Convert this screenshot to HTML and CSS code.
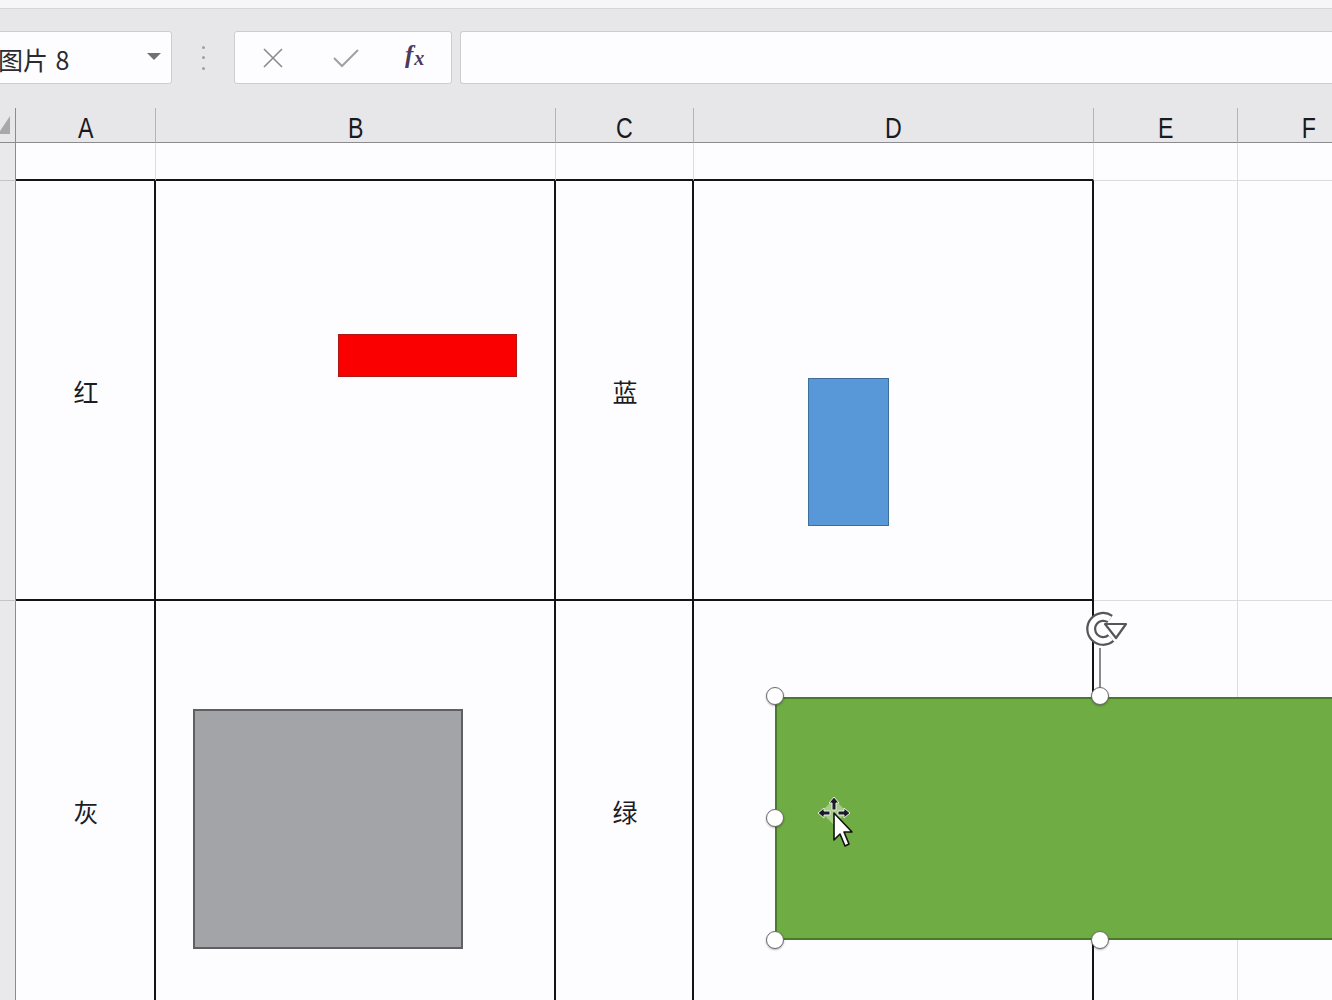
FILE: index.html
```html
<!DOCTYPE html>
<html lang="zh">
<head>
<meta charset="utf-8">
<link rel="stylesheet" href="styles.css">
</head>
<body>
<div class="strip"></div>
<div class="toolbar">
  <div class="namebox">
    <span class="name">图片 8</span>
    <span class="caret"></span>
  </div>
  <div class="dots"><i></i><i></i><i></i></div>
  <div class="fbtns">
    <svg class="ico-x" width="22" height="22" viewBox="0 0 22 22"><path d="M2 2 L20 20 M20 2 L2 20" stroke="#8a8a8e" stroke-width="1.6" fill="none"/></svg>
    <svg class="ico-ok" width="26" height="22" viewBox="0 0 26 22"><path d="M1 11 L9 19 L25 3" stroke="#a0a0a4" stroke-width="2" fill="none"/></svg>
    <span class="fx">f<sub>x</sub></span>
  </div>
  <div class="finput"></div>
</div>
<div class="sheet">
  <div class="hc corner"><span class="tri"></span></div>
  <div class="hc"><span class="ltr">A</span></div>
  <div class="hc"><span class="ltr">B</span></div>
  <div class="hc"><span class="ltr">C</span></div>
  <div class="hc"><span class="ltr">D</span></div>
  <div class="hc"><span class="ltr">E</span></div>
  <div class="hc"><span class="ltr">F</span></div>

  <div class="rh"></div>
  <div class="c tb"></div>
  <div class="c tb"></div>
  <div class="c tb"></div>
  <div class="c tb"></div>
  <div class="c"></div>
  <div class="c"></div>

  <div class="rh"></div>
  <div class="c t lab">红</div>
  <div class="c t"></div>
  <div class="c t lab">蓝</div>
  <div class="c t"></div>
  <div class="c"></div>
  <div class="c"></div>

  <div class="rh"></div>
  <div class="c t lab">灰</div>
  <div class="c t"></div>
  <div class="c t lab">绿</div>
  <div class="c t"></div>
  <div class="c"></div>
  <div class="c"></div>

  <div class="shape red"></div>
  <div class="shape blue"></div>
  <div class="shape gray"></div>
  <div class="shape green"></div>

  <div class="rotline"></div>
  <svg class="rot" width="56" height="48" viewBox="0 0 56 48">
    <path d="M31 11 A12 12 0 1 0 32 30" stroke="#55555b" stroke-width="10" fill="none"/>
    <path d="M31 11 A12 12 0 1 0 32 30" stroke="#ffffff" stroke-width="5.5" fill="none"/>
    <path d="M26 16 L47 16 L37 30 Z" fill="#ffffff" stroke="#55555b" stroke-width="2.2" stroke-linejoin="round"/>
  </svg>
  <span class="hd h1"></span>
  <span class="hd h2"></span>
  <span class="hd h3"></span>
  <span class="hd h4"></span>
  <span class="hd h5"></span>

  <svg class="cursor" width="46" height="58" viewBox="0 0 46 58">
    <path d="M17 3 L30 16 L17 29 L4 16 Z" fill="#b8d8a0" opacity="0.75"/>
    <g fill="#1a1a2a" stroke="#e8f0e0" stroke-width="1">
      <path d="M17 1 L22 7 L19 7 L19 14 L15 14 L15 7 L12 7 Z"/>
      <path d="M1 17 L7 12 L7 15 L13 15 L13 19 L7 19 L7 22 Z"/>
      <path d="M33 17 L27 12 L27 15 L21 15 L21 19 L27 19 L27 22 Z"/>
    </g>
    <path d="M17 17 L17 44 L23 38 L28 50 L32 48 L27 36 L35 36 Z" fill="#ffffff" stroke="#111" stroke-width="1.6" stroke-linejoin="round"/>
  </svg>
</div>
</body>
</html>
```
FILE: styles.css
```css
html, body {
  margin: 0;
  padding: 0;
  width: 1332px;
  height: 1000px;
  overflow: hidden;
  background: #fdfdff;
  font-family: "Liberation Sans", "Noto Sans CJK SC", sans-serif;
}
.strip {
  height: 8px;
  background: #f6f6f8;
  border-bottom: 1px solid #d6d6da;
}
.toolbar {
  height: 99px;
  background: #e7e7e9;
  display: flex;
  align-items: center;
  box-sizing: border-box;
  padding-bottom: 2px;
}
.namebox {
  margin-left: -10px;
  width: 182px;
  height: 53px;
  box-sizing: border-box;
  background: #fdfdff;
  border: 1px solid #cdcdd1;
  border-radius: 3px;
  display: flex;
  align-items: center;
  position: relative;
}
.name {
  font-family: "Noto Sans CJK SC", sans-serif;
  font-size: 25px;
  color: #2a2a30;
  margin-left: 7px;
  padding-top: 2px;
  word-spacing: 2px;
}
.caret {
  position: absolute;
  left: 156px;
  top: 21px;
  width: 0;
  height: 0;
  border-left: 7px solid transparent;
  border-right: 7px solid transparent;
  border-top: 7px solid #707074;
}
.dots {
  width: 62px;
  height: 24px;
  display: flex;
  flex-direction: column;
  align-items: center;
  justify-content: space-between;
}
.dots i {
  width: 3px;
  height: 3px;
  border-radius: 50%;
  background: #a0a0a4;
}
.fbtns {
  width: 218px;
  height: 53px;
  box-sizing: border-box;
  background: #fdfdff;
  border: 1px solid #cdcdd1;
  border-radius: 3px;
  position: relative;
}
.ico-x { position: absolute; left: 27px; top: 15px; }
.ico-ok { position: absolute; left: 98px; top: 15px; }
.fx {
  position: absolute;
  left: 170px;
  top: 9px;
  font-family: "Liberation Serif", serif;
  font-style: italic;
  font-weight: bold;
  font-size: 25px;
  color: #4a3a5c;
}
.fx sub {
  font-size: 20px;
  vertical-align: -2px;
  margin-left: 1px;
}
.finput {
  margin-left: 8px;
  flex: 1;
  height: 53px;
  box-sizing: border-box;
  background: #fdfdff;
  border: 1px solid #cdcdd1;
  border-right: none;
  border-radius: 3px 0 0 3px;
}
.sheet {
  position: relative;
  display: grid;
  grid-template-columns: 16px 140px 400px 138px 400px 144px 142px;
  grid-template-rows: 35px 38px 420px 420px;
}
.sheet > div {
  box-sizing: border-box;
}
.hc {
  background: #e7e7e9;
  border-right: 1px solid #b4b4b8;
  border-bottom: 1px solid #8c8c90;
  display: flex;
  align-items: flex-end;
  justify-content: center;
  font-family: "Liberation Sans", sans-serif;
  font-size: 29px;
  color: #1a1a1e;
  line-height: 1;
}
.ltr {
  display: inline-block;
  transform: scaleX(0.8);
  position: relative;
  top: 1px;
}
.corner {
  position: relative;
  border-right: 1px solid #8c8c90;
}
.tri {
  position: absolute;
  left: -2px;
  top: 8px;
  width: 0;
  height: 0;
  border-left: 12px solid transparent;
  border-bottom: 18px solid #a8a8ac;
}
.rh {
  background: #e9e9eb;
  border-right: 1px solid #8c8c90;
  border-bottom: 1px solid #c4c4c8;
}
.c {
  border-right: 1px solid #dcdce0;
  border-bottom: 1px solid #dcdce0;
}
.c.tb {
  border-bottom: 2px solid #141418;
}
.c.t {
  border-right: 2px solid #141418;
  border-bottom: 2px solid #141418;
}
.lab {
  display: flex;
  align-items: center;
  justify-content: center;
  font-family: "Noto Sans CJK SC", sans-serif;
  font-size: 25px;
  color: #1c1c24;
  padding-top: 2px;
  padding-left: 2px;
}
.shape {
  position: absolute;
  box-sizing: border-box;
}
.red {
  left: 338px;
  top: 226px;
  width: 179px;
  height: 43px;
  background: #fb0000;
  border: 1px solid #b01818;
}
.blue {
  left: 808px;
  top: 270px;
  width: 81px;
  height: 148px;
  background: #5898d8;
  border: 1px solid #3e6e9e;
}
.gray {
  left: 193px;
  top: 601px;
  width: 270px;
  height: 240px;
  background: #a3a4a7;
  border: 2px solid #606064;
}
.green {
  left: 775px;
  top: 589px;
  width: 600px;
  height: 243px;
  background: #6fac43;
  border: 2px solid #4a7a2c;
  border-right: none;
}
.rotline {
  position: absolute;
  left: 1099px;
  top: 540px;
  width: 2px;
  height: 50px;
  background: #8a8a8e;
}
.rot {
  position: absolute;
  left: 1079px;
  top: 500px;
}
.hd {
  position: absolute;
  width: 18px;
  height: 18px;
  box-sizing: border-box;
  border-radius: 50%;
  background: #ffffff;
  border: 1.5px solid #6c6c70;
  box-shadow: 0 1px 2px rgba(0,0,0,0.3);
}
.h1 { left: 766px; top: 579px; }
.h2 { left: 1091px; top: 579px; }
.h3 { left: 766px; top: 701px; }
.h4 { left: 766px; top: 823px; }
.h5 { left: 1091px; top: 823px; }
.cursor {
  position: absolute;
  left: 817px;
  top: 688px;
}
```
